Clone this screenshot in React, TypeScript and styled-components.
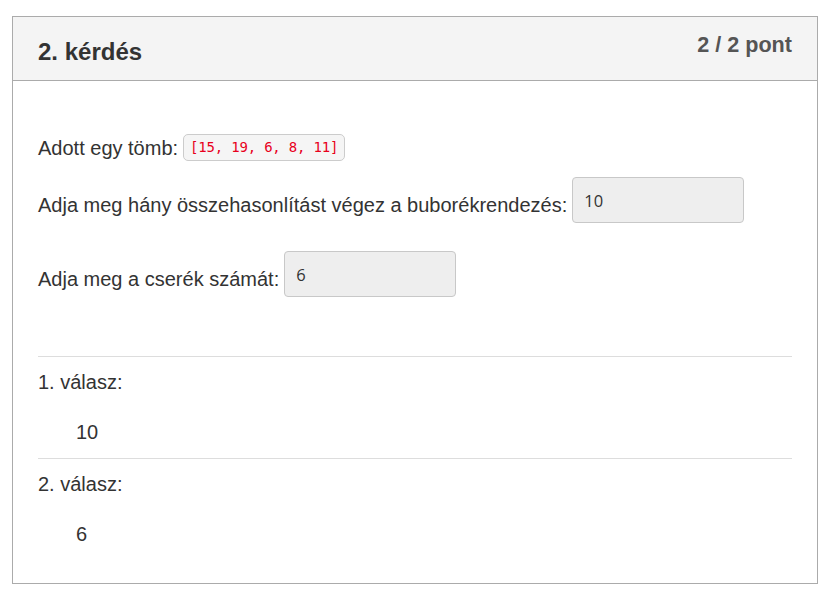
import React from "react";
import styled, { createGlobalStyle } from "styled-components";

const Global = createGlobalStyle`
  html, body { margin: 0; padding: 0; background: #fff; }
  body { font-family: "Liberation Sans", Arial, sans-serif; color: #333; }
`;

const Page = styled.div`
  padding: 16px 0 0 12px;
`;

const Panel = styled.section`
  width: 806px;
  box-sizing: border-box;
  border: 1px solid #ababab;
  background: #fff;
`;

const Header = styled.header`
  height: 64px;
  box-sizing: border-box;
  background: #f4f4f4;
  border-bottom: 1px solid #ababab;
  padding: 16px 25px 0;
  display: flex;
  justify-content: space-between;
  align-items: flex-start;
`;

const Title = styled.h2`
  margin: 6px 0 0;
  font-size: 24px;
  line-height: 26px;
  font-weight: bold;
  color: #333;
`;

const Score = styled.div`
  font-size: 21.6px;
  line-height: 24px;
  font-weight: bold;
  color: #555;
`;

const Body = styled.div`
  padding: 53px 25px 23px;
  display: flex;
  flex-direction: column;
`;

const Row = styled.div<{ $gap?: number }>`
  display: flex;
  align-items: center;
  margin-top: ${(p) => p.$gap ?? 0}px;
`;

const Label = styled.span<{ $shift?: number }>`
  font-size: 20px;
  line-height: 20px;
  padding-top: ${(p) => p.$shift ?? 0}px;
  margin-right: 5px;
  white-space: nowrap;
`;

const Code = styled.code`
  display: inline-block;
  font-family: "DejaVu Sans Mono", "Liberation Mono", monospace;
  font-size: 14px;
  letter-spacing: -0.2px;
  line-height: 21px;
  padding: 2px 6px;
  color: #e8001c;
  background: #f5f5f5;
  border: 1px solid #ccc;
  border-radius: 5px;
`;

const Field = styled.input`
  width: 172px;
  height: 46px;
  box-sizing: border-box;
  border: 1px solid #c8c8c8;
  border-radius: 4px;
  background: #eee;
  padding: 0 11px;
  font-family: "Open Sans", "Noto Sans", sans-serif;
  font-size: 16.5px;
  color: #333;
  outline: none;
`;

const Answers = styled.div`
  margin-top: 59px;
`;

const Answer = styled.div`
  border-top: 1px solid #ddd;
  padding: 15px 0 16px;
  font-size: 20px;
  line-height: 20px;
`;

const AnswerLabel = styled.div``;

const AnswerValue = styled.div`
  margin: 30px 0 0 38px;
`;

const answers = [
  { label: "1. válasz:", value: "10" },
  { label: "2. válasz:", value: "6" },
];

export default function App() {
  return (
    <>
      <Global />
      <Page>
        <Panel>
          <Header>
            <Title>2. kérdés</Title>
            <Score>2 / 2 pont</Score>
          </Header>
          <Body>
            <Row>
              <Label>Adott egy tömb:</Label>
              <Code>[15, 19, 6, 8, 11]</Code>
            </Row>
            <Row $gap={16}>
              <Label $shift={9}>
                Adja meg hány összehasonlítást végez a buborékrendezés:
              </Label>
              <Field readOnly value="10" />
            </Row>
            <Row $gap={28}>
              <Label $shift={9}>Adja meg a cserék számát:</Label>
              <Field readOnly value="6" />
            </Row>
            <Answers>
              {answers.map((a) => (
                <Answer key={a.label}>
                  <AnswerLabel>{a.label}</AnswerLabel>
                  <AnswerValue>{a.value}</AnswerValue>
                </Answer>
              ))}
            </Answers>
          </Body>
        </Panel>
      </Page>
    </>
  );
}
